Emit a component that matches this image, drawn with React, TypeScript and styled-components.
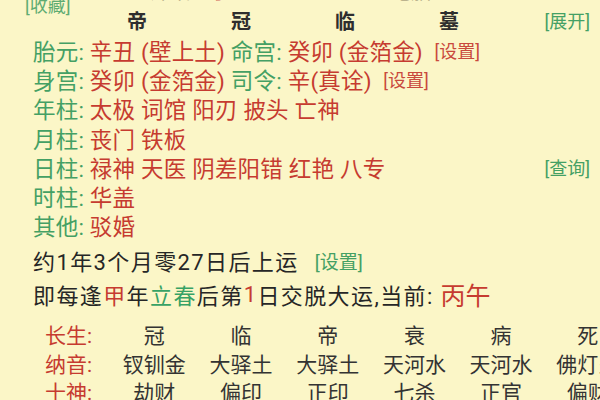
import React from 'react';
import styled, { createGlobalStyle } from 'styled-components';

const GlobalStyle = createGlobalStyle`
  html, body {
    margin: 0;
    padding: 0;
    background: #fbf6c7;
  }
  body {
    font-family: Roboto, "Noto Sans CJK SC", sans-serif;
    overflow: hidden;
  }
`;

const green = '#44a064';
const red = '#c63b30';
const dark = '#262626';

const Page = styled.div`
  width: 600px;
  height: 400px;
  overflow: hidden;
  background: #fbf6c7;
  color: ${dark};
`;

const CutRow = styled.div`
  display: grid;
  grid-template-columns: 140px 60px 40px 60px 80px 120px 1fr;
  margin-top: -21px;
  height: 24px;
  line-height: 24px;
  font-size: 21px;
  color: #8c7f62;
`;

const CutCell = styled.span<{ $red?: boolean }>`
  color: ${(p) => (p.$red ? '#d0675a' : '#8c7f62')};
  padding-left: 10px;
`;

const Header = styled.div`
  display: grid;
  grid-template-columns: 60px repeat(4, 104px) 1fr;
  align-items: center;
  height: 30px;
  padding: 2px 10px 0 25px;
`;

const Collect = styled.span`
  align-self: start;
  margin-top: -14px;
  font-size: 18px;
  white-space: nowrap;
  color: ${green};
  opacity: 0.85;
`;

const Branch = styled.span`
  justify-self: center;
  font-size: 20px;
  font-weight: 700;
  color: #2e2e2e;
`;

const Link = styled.span<{ $tone?: 'red' | 'green' }>`
  font-size: 18px;
  letter-spacing: 0;
  color: ${(p) => (p.$tone === 'red' ? '#c9493d' : green)};
  white-space: pre;
`;

const HeaderLink = styled(Link)`
  justify-self: end;
`;

const InfoList = styled.div`
  display: flex;
  flex-direction: column;
  padding: 0 10px 0 33px;
`;

const InfoRow = styled.div`
  display: flex;
  align-items: center;
  height: 29.3px;
  font-size: 22.5px;
  letter-spacing: 0.2px;
  white-space: pre;
`;

const Label = styled.span`
  color: ${green};
`;

const Value = styled.span`
  color: ${red};
`;

const RightLink = styled(Link)`
  margin-left: auto;
`;

const GapLink = styled(Link)`
  margin-left: 16px;
  font-size: 19px;
`;

const Summary = styled.div<{ $h: number }>`
  display: flex;
  align-items: center;
  height: ${(p) => p.$h}px;
  padding-left: 33px;
  font-size: 22px;
  letter-spacing: 1.4px;
  white-space: pre;
  color: ${dark};
`;

const Mark = styled.span<{ $c: string }>`
  color: ${(p) => p.$c};
`;

const Current = styled.span`
  color: ${red};
  font-size: 25px;
  letter-spacing: 0;
`;

const Table = styled.div`
  display: grid;
  grid-template-columns: 66px repeat(6, 86.7px);
  grid-auto-rows: 28.5px;
  align-items: center;
  margin-top: 12px;
  padding-left: 45px;
  font-size: 21px;
`;

const RowLabel = styled.span`
  color: ${red};
`;

const Cell = styled.span`
  justify-self: center;
  white-space: nowrap;
  color: #333;
`;

const stages = ['冠', '临', '帝', '衰', '病', '死'];
const nayin = ['钗钏金', '大驿土', '大驿土', '天河水', '天河水', '佛灯火'];
const gods = ['劫财', '偏印', '正印', '七杀', '正官', '偏财'];

export default function App() {
  return (
    <Page>
      <GlobalStyle />
      <CutRow>
        <span />
        <CutCell>沐浴</CutCell>
        <CutCell $red>子</CutCell>
        <CutCell>丑</CutCell>
        <span />
        <CutCell>绝胎</CutCell>
        <span />
      </CutRow>
      <Header>
        <Collect>[收藏]</Collect>
        <Branch>帝</Branch>
        <Branch>冠</Branch>
        <Branch>临</Branch>
        <Branch>墓</Branch>
        <HeaderLink>[展开]</HeaderLink>
      </Header>
      <InfoList>
        <InfoRow>
          <Label>胎元: </Label>
          <Value>辛丑 (壁上土) </Value>
          <Label>命宫: </Label>
          <Value>癸卯 (金箔金)  </Value>
          <Link $tone="red">[设置]</Link>
        </InfoRow>
        <InfoRow>
          <Label>身宫: </Label>
          <Value>癸卯 (金箔金) </Value>
          <Label>司令: </Label>
          <Value>辛(真诠)  </Value>
          <Link $tone="red">[设置]</Link>
        </InfoRow>
        <InfoRow>
          <Label>年柱: </Label>
          <Value>太极 词馆 阳刃 披头 亡神</Value>
        </InfoRow>
        <InfoRow>
          <Label>月柱: </Label>
          <Value>丧门 铁板</Value>
        </InfoRow>
        <InfoRow>
          <Label>日柱: </Label>
          <Value>禄神 天医 阴差阳错 红艳 八专</Value>
          <RightLink>[查询]</RightLink>
        </InfoRow>
        <InfoRow>
          <Label>时柱: </Label>
          <Value>华盖</Value>
        </InfoRow>
        <InfoRow>
          <Label>其他: </Label>
          <Value>驳婚</Value>
        </InfoRow>
      </InfoList>
      <Summary $h={40}>
        约1年3个月零27日后上运<GapLink>[设置]</GapLink>
      </Summary>
      <Summary $h={28}>
        即每逢<Mark $c={red}>甲</Mark>年<Mark $c="#37a265">立春</Mark>后第<Mark $c={red}>1</Mark>
        日交脱大运,当前: <Current>丙午</Current>
      </Summary>
      <Table>
        <RowLabel>长生:</RowLabel>
        {stages.map((s, i) => (
          <Cell key={'s' + i}>{s}</Cell>
        ))}
        <RowLabel>纳音:</RowLabel>
        {nayin.map((s, i) => (
          <Cell key={'n' + i}>{s}</Cell>
        ))}
        <RowLabel>十神:</RowLabel>
        {gods.map((s, i) => (
          <Cell key={'g' + i}>{s}</Cell>
        ))}
      </Table>
    </Page>
  );
}
